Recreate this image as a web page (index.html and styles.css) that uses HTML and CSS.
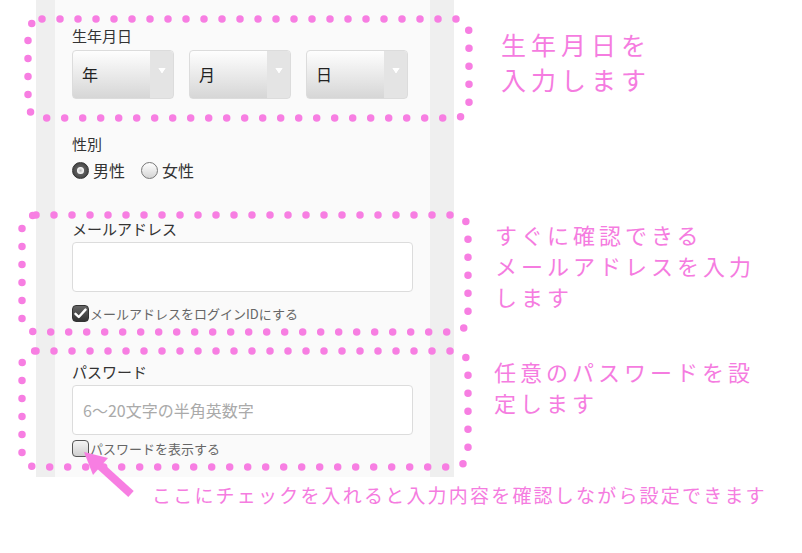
FILE: index.html
```html
<!DOCTYPE html>
<html lang="ja">
<head>
    <meta charset="UTF-8">
    <title>会員登録 入力説明</title>
    <link rel="stylesheet" href="styles.css">
</head>
<body>
    <div class="page">
        <div class="top-row">
            <div class="panel">
                <div class="form">
                    <!-- 生年月日 -->
                    <div class="field birth">
                        <div class="label">生年月日</div>
                        <div class="selects">
                            <div class="select"><span class="select-text">年</span><span class="select-arrow"><i></i></span></div>
                            <div class="select"><span class="select-text">月</span><span class="select-arrow"><i></i></span></div>
                            <div class="select"><span class="select-text">日</span><span class="select-arrow"><i></i></span></div>
                        </div>
                    </div>

                    <!-- 性別 -->
                    <div class="field gender">
                        <div class="label">性別</div>
                        <div class="radios">
                            <span class="radio checked"></span><span class="radio-label">男性</span>
                            <span class="radio"></span><span class="radio-label">女性</span>
                        </div>
                    </div>

                    <!-- メールアドレス -->
                    <div class="field mail">
                        <div class="label">メールアドレス</div>
                        <div class="input"></div>
                        <div class="check-row">
                            <span class="checkbox checked">
                                <svg width="13" height="11" viewBox="0 0 13 11"><path d="M1.5 5.8 L4.8 9 L11.5 1.6" fill="none" stroke="#fff" stroke-width="2.4" stroke-linecap="round" stroke-linejoin="round"/></svg>
                            </span>
                            <span class="check-label">メールアドレスをログインIDにする</span>
                        </div>
                    </div>

                    <!-- パスワード -->
                    <div class="field password">
                        <div class="label">パスワード</div>
                        <div class="input"><span class="placeholder">6〜20文字の半角英数字</span></div>
                        <div class="check-row">
                            <span class="checkbox"></span>
                            <span class="check-label">パスワードを表示する</span>
                        </div>
                    </div>
                </div>
            </div>

            <div class="notes">
                <div class="note note-birth"><p>生年月日を</p><p>入力します</p></div>
                <div class="note note-mail"><p>すぐに確認できる</p><p>メールアドレスを入力</p><p>します</p></div>
                <div class="note note-pass"><p>任意のパスワードを設</p><p>定します</p></div>
            </div>
        </div>

        <p class="caption">ここにチェックを入れると入力内容を確認しながら設定できます</p>

        <!-- 注釈の点線と矢印 -->
        <svg class="marks" width="802" height="553" viewBox="0 0 802 553">
            <g fill="none" stroke="#f77ee2" stroke-width="7.5" stroke-linecap="round" stroke-dasharray="0 18">
                <rect x="28" y="19" width="441" height="99" rx="14"/>
                <rect x="22" y="215" width="446" height="117" rx="14"/>
                <rect x="22" y="351" width="446" height="116" rx="14"/>
            </g>
            <line x1="131" y1="494" x2="99" y2="465" stroke="#f77ee2" stroke-width="8"/>
            <polygon points="84,452 108,458 93,475" fill="#f77ee2"/>
        </svg>
    </div>
</body>
</html>
```

FILE: styles.css
```css
body {
    margin: 0;
    background-color: #fff;
    font-family: "Noto Sans CJK JP", "Noto Sans", sans-serif;
    color: #333;
}
.page {
    position: relative;
    width: 802px;
    height: 553px;
}
.top-row {
    display: flex;
}
.panel {
    margin-left: 36px;
    width: 375px;
    height: 477px;
    padding: 0 24px 0 19px;
    background-color: #efefef;
}
.form {
    height: 100%;
    padding: 0 17px;
    background-color: #fafafa;
}
.label {
    font-size: 15px;
    line-height: 20px;
    color: #333;
}

/* 生年月日 */
.birth {
    padding-top: 26px;
}
.selects {
    display: flex;
    gap: 15px;
    margin-top: 4px;
}
.select {
    display: flex;
    width: 100px;
    height: 47px;
    border: 1px solid #dcdcdc;
    border-radius: 4px;
    overflow: hidden;
    background: linear-gradient(#fefefe, #d6d6d6);
}
.select-text {
    flex: 1;
    padding-left: 9px;
    font-size: 16px;
    line-height: 47px;
    color: #222;
}
.select-arrow {
    width: 23px;
    background-color: #e4e4e4;
    display: flex;
    justify-content: center;
    padding-top: 17px;
    box-sizing: border-box;
}
.select-arrow i {
    width: 0;
    height: 0;
    border-left: 4px solid transparent;
    border-right: 4px solid transparent;
    border-top: 6px solid #fff;
    filter: drop-shadow(0 0 0.5px #bbb);
}

/* 性別 */
.gender {
    padding-top: 35px;
}
.radios {
    display: flex;
    align-items: center;
    margin-top: 7px;
    height: 18px;
}
.radio {
    width: 15px;
    height: 15px;
    border: 1px solid #777;
    border-radius: 50%;
    background: linear-gradient(#fff, #d4d4d4);
    position: relative;
}
.radio.checked {
    border-color: #333;
    background: radial-gradient(circle, #777 0, #333 100%);
}
.radio.checked::after {
    content: "";
    position: absolute;
    left: 4px;
    top: 4px;
    width: 7px;
    height: 7px;
    border-radius: 50%;
    background: radial-gradient(circle, #bbb 0, #fff 70%);
}
.radio-label {
    font-size: 16px;
    margin-left: 4px;
    margin-right: 16px;
}

/* メール / パスワード */
.mail {
    padding-top: 40px;
}
.password {
    padding-top: 40px;
}
.input {
    height: 48px;
    margin-top: 3px;
    border: 1px solid #dcdcdc;
    border-radius: 4px;
    background-color: #fff;
    display: flex;
    align-items: center;
}
.placeholder {
    padding-left: 10px;
    font-size: 16px;
    color: #aaa;
}
.check-row {
    display: flex;
    align-items: center;
    margin-top: 12px;
    height: 18px;
}
.password .check-row {
    margin-top: 4px;
}
.checkbox {
    width: 15px;
    height: 15px;
    border: 1.5px solid #555;
    border-radius: 4px;
    background: linear-gradient(#f4f4f4, #cfcfcf);
    display: flex;
    align-items: center;
    justify-content: center;
}
.checkbox.checked {
    background: linear-gradient(#666, #333);
    border-color: #333;
}
.check-label {
    font-size: 13px;
    color: #666;
    margin-left: 1px;
}

/* 注釈 */
.notes {
    padding-left: 47px;
}
.note {
    color: #f57ce0;
}
.note p {
    margin: 0;
    white-space: nowrap;
}
.note-birth {
    margin-top: 27px;
}
.note-birth p {
    height: 35px;
    font-size: 25px;
    line-height: 35px;
    letter-spacing: 5px;
}
.note-mail {
    margin-top: 122px;
    margin-left: -6px;
}
.note-pass {
    margin-top: 44px;
    margin-left: -7px;
}
.note-mail p,
.note-pass p {
    height: 31px;
    font-size: 22px;
    line-height: 31px;
    letter-spacing: 4px;
}
.caption {
    margin: 5px 0 0 152px;
    font-size: 19px;
    line-height: 26px;
    letter-spacing: 2.2px;
    color: #f57ce0;
}
.marks {
    position: absolute;
    left: 0;
    top: 0;
    pointer-events: none;
}
```
